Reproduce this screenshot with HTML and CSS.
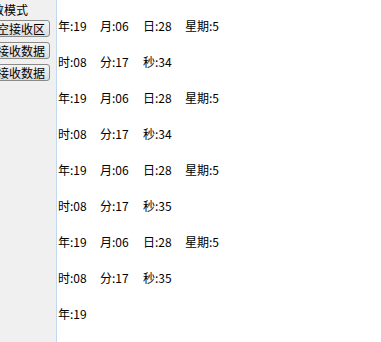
FILE: index.html
```html
<!DOCTYPE html>
<html lang="zh-CN">
<head>
    <meta charset="UTF-8" />
    <meta name="viewport" content="width=device-width, initial-scale=1.0"/>
    <title>串口接收</title>
    <link rel="stylesheet" href="styles.css">
</head>
<body>
<div class="window">
    <div class="side-panel">
        <div class="mode-label">十六进制数模式</div>
        <button type="button" class="btn">清空接收区</button>
        <button type="button" class="btn">停止接收数据</button>
        <button type="button" class="btn">开始接收数据</button>
    </div>

    <div class="receive-area" id="receiveArea">
        <div class="line"><span>年:19</span><span>月:06</span><span>日:28</span><span>星期:5</span></div>
        <div class="line"><span>时:08</span><span>分:17</span><span>秒:34</span></div>
        <div class="line"><span>年:19</span><span>月:06</span><span>日:28</span><span>星期:5</span></div>
        <div class="line"><span>时:08</span><span>分:17</span><span>秒:34</span></div>
        <div class="line"><span>年:19</span><span>月:06</span><span>日:28</span><span>星期:5</span></div>
        <div class="line"><span>时:08</span><span>分:17</span><span>秒:35</span></div>
        <div class="line"><span>年:19</span><span>月:06</span><span>日:28</span><span>星期:5</span></div>
        <div class="line"><span>时:08</span><span>分:17</span><span>秒:35</span></div>
        <div class="line"><span>年:19</span></div>
    </div>
</div>
</body>
</html>
```

FILE: styles.css
```css
body {
  margin: 0;
  font-family: "Noto Sans CJK SC", "DejaVu Sans", sans-serif;
  font-size: 12px;
  color: #000;
  background-color: #fff;
}

.window {
  display: flex;
  height: 342px;
  overflow: hidden;
}

.side-panel {
  width: 57px;
  flex-shrink: 0;
  background-color: #f0f0f0;
  border-right: 1px solid #c3d8ef;
  overflow: hidden;
  display: flex;
  flex-direction: column;
  align-items: flex-end;
  padding-top: 3px;
  box-sizing: border-box;
}

.mode-label {
  line-height: 14px;
  white-space: nowrap;
  margin-right: 28px;
  margin-bottom: 3px;
}

.btn {
  font-family: inherit;
  font-size: 12px;
  line-height: 13px;
  white-space: nowrap;
  height: 17px;
  padding: 0 4px;
  margin: 0 6px 5px 0;
  color: #000;
  background: linear-gradient(#f4f4f4, #dcdcdc);
  border: 1px solid #8a8a8a;
  border-radius: 3px;
  flex-shrink: 0;
}

.receive-area {
  flex: 1;
  padding: 8px 0 0 1px;
}

.line {
  display: grid;
  grid-template-columns: 42px 43px 42px auto;
  justify-content: start;
  height: 36px;
  line-height: 36px;
  white-space: nowrap;
}
```
